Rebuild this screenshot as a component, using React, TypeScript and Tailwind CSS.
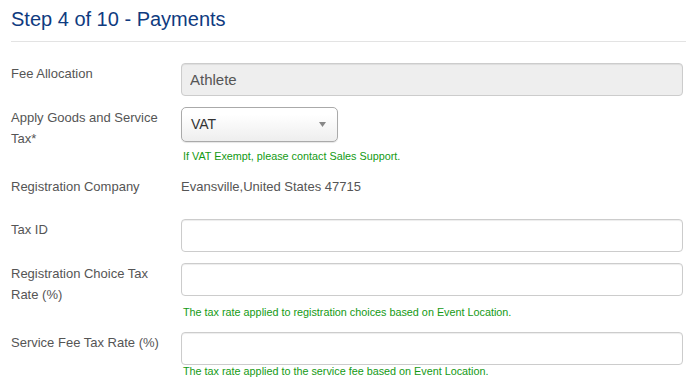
const font = { fontFamily: '"Liberation Sans", Arial, sans-serif' };

const inputCls =
  "block w-full h-[33px] rounded-[4px] border border-[#ccc] px-[8px] text-[15px] text-[#555] shadow-[inset_0_1px_1px_rgba(0,0,0,0.075)] outline-none";

const Label = ({ children }: { children: React.ReactNode }) => (
  <div className="w-[170px] shrink-0 pr-[15px] text-[13px] leading-[21px] text-[#555]">
    {children}
  </div>
);

const Help = ({ children, className = "" }: { children: React.ReactNode; className?: string }) => (
  <div className={`pl-[2px] text-[10.8px] text-[#149a14] ${className}`}>{children}</div>
);

export default function App() {
  return (
    <div className="min-h-screen bg-white pt-[5px] pl-[11px] pr-[9px]" style={font}>
      <h1 className="text-[20px] leading-[28px] text-[#0f3b80]">Step 4 of 10 - Payments</h1>
      <div className="mt-[8px] border-t border-[#e3e3e3]" />

      <div className="pr-[3px]">
        {/* Fee Allocation */}
        <div className="mt-[21px] flex">
          <Label>Fee Allocation</Label>
          <div className="flex-1">
            <input className={`${inputCls} bg-[#eeeeee]`} value="Athlete" readOnly />
          </div>
        </div>

        {/* Apply tax */}
        <div className="mt-[11px] flex">
          <Label>Apply Goods and Service Tax*</Label>
          <div className="flex-1">
            <div className="flex h-[35px] w-[157px] items-center justify-between rounded-[5px] border border-[#aaa] bg-gradient-to-b from-white from-[20%] to-[#eeeeee] pl-[9px] pr-[11px] text-[14px] text-[#333] shadow-[0_1px_1px_rgba(0,0,0,0.1)]">
              <span>VAT</span>
              <svg width="7" height="5" viewBox="0 0 7 5">
                <path d="M0 0h7L3.5 5z" fill="#888" />
              </svg>
            </div>
            <Help className="mt-[7px] leading-[15px]">If VAT Exempt, please contact Sales Support.</Help>
          </div>
        </div>

        {/* Registration Company */}
        <div className="mt-[12px] flex">
          <Label>Registration Company</Label>
          <div className="flex-1 text-[13px] leading-[21px] text-[#555]">Evansville,United States 47715</div>
        </div>

        {/* Tax ID */}
        <div className="mt-[22px] flex">
          <Label>Tax ID</Label>
          <div className="flex-1">
            <input className={`${inputCls} bg-white`} />
          </div>
        </div>

        {/* Registration Choice Tax Rate */}
        <div className="mt-[11px] flex">
          <Label>Registration Choice Tax Rate (%)</Label>
          <div className="flex-1">
            <input className={`${inputCls} bg-white`} />
            <Help className="mt-[9px] leading-[15px]">
              The tax rate applied to registration choices based on Event Location.
            </Help>
          </div>
        </div>

        {/* Service Fee Tax Rate */}
        <div className="mt-[12px] flex">
          <Label>Service Fee Tax Rate (%)</Label>
          <div className="flex-1">
            <input className={`${inputCls} bg-white`} />
            <Help className="leading-[13px]">The tax rate applied to the service fee based on Event Location.</Help>
          </div>
        </div>
      </div>
    </div>
  );
}
